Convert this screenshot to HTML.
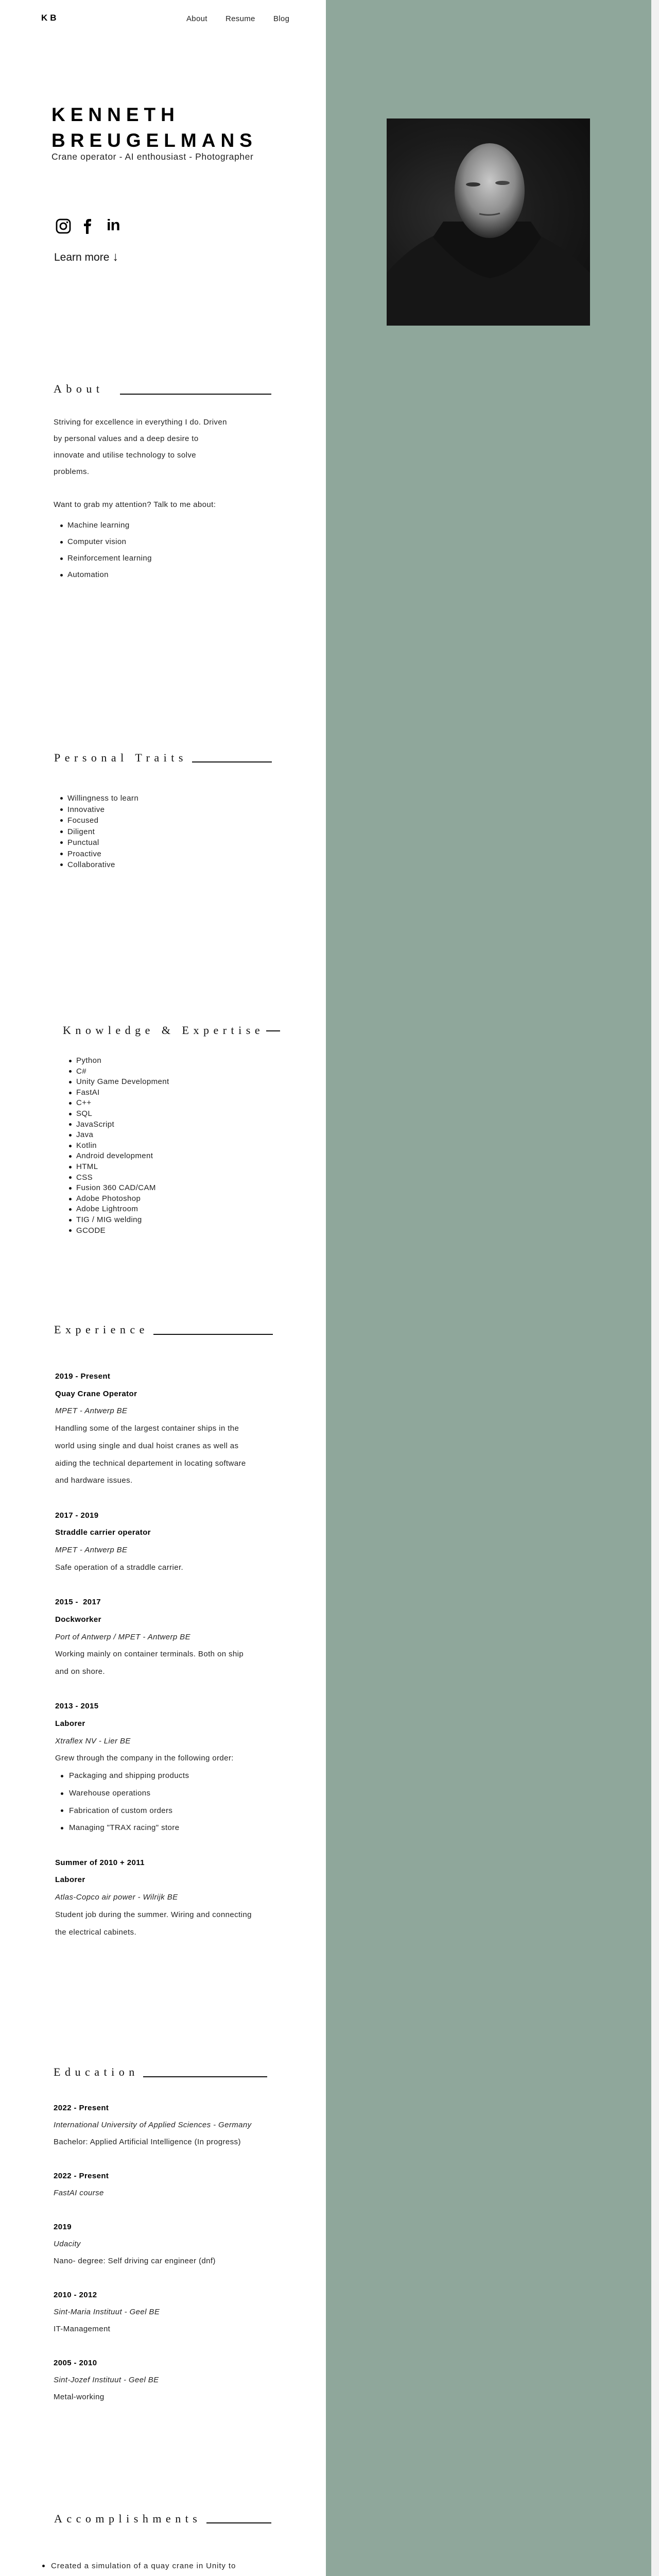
<!DOCTYPE html>
<html><head><meta charset="utf-8">
<style>
*{margin:0;padding:0;box-sizing:border-box}
html,body{width:1280px;height:5484px;background:#fff;overflow:hidden}
body{position:relative;font-family:"Liberation Sans",sans-serif;color:#111}
.a{position:absolute;white-space:nowrap}
#green{position:absolute;left:633px;top:0;width:632px;height:5341px;background:#8fa79b}
#scroll{position:absolute;left:1265px;top:0;width:15px;height:5484px;background:#f1f1f1}
#photo{position:absolute;left:751px;top:230px;width:395px;height:402px;overflow:hidden;
 background:radial-gradient(ellipse at 35% 45%,#2e2e2e 0%,#1b1b1b 45%,#0d0d0d 100%)}
.nav{font-size:15px;top:28px;color:#222;letter-spacing:.3px}
.h{font-family:"Liberation Serif",serif;font-size:22px;letter-spacing:8.5px;color:#111;line-height:30px}
.rule{position:absolute;height:1.5px;background:#111}
.p{font-size:15px;color:#222;letter-spacing:.4px}
ul{list-style:none}
li{position:relative}
li:before{content:"";position:absolute;width:5px;height:5px;border-radius:50%;background:#111}
.b{font-weight:bold;color:#000}
.i{font-style:italic}
</style></head><body>
<div id="green"></div>
<div id="scroll"></div>
<div id="photo">
 <svg width="395" height="402" viewBox="0 0 395 402">
  <defs>
   <radialGradient id="face" cx="50%" cy="40%" r="60%"><stop offset="0" stop-color="#c9c9c9"/><stop offset=".6" stop-color="#8a8a8a"/><stop offset="1" stop-color="#2a2a2a"/></radialGradient>
  </defs>
  <path d="M0 402 L0 300 Q60 230 140 210 L255 210 Q340 240 395 300 L395 402 Z" fill="#161616"/>
  <path d="M90 230 Q150 300 200 310 Q260 300 300 230 L280 200 L110 200 Z" fill="#111"/>
  <ellipse cx="200" cy="140" rx="68" ry="92" fill="url(#face)"/>
  <ellipse cx="168" cy="128" rx="14" ry="4" fill="#333"/>
  <ellipse cx="225" cy="125" rx="14" ry="4" fill="#444"/>
  <path d="M180 185 Q200 190 220 184" stroke="#444" stroke-width="3" fill="none"/>
 </svg>
</div>

<div class="a" style="left:80px;top:25px;font-size:17px;font-weight:bold;letter-spacing:5px;color:#000">KB</div>
<div class="a nav" style="left:362px">About</div>
<div class="a nav" style="left:438px">Resume</div>
<div class="a nav" style="left:531px">Blog</div>

<div class="a" style="left:100px;top:198px;font-size:37px;font-weight:bold;letter-spacing:10px;line-height:50px;color:#000">KENNETH<br>BREUGELMANS</div>
<div class="a" style="left:100px;top:294px;font-size:17.5px;letter-spacing:.6px;color:#222">Crane operator - AI enthousiast - Photographer</div>

<svg class="a" style="left:108px;top:424px" width="30" height="30" viewBox="0 0 30 30"><rect x="2" y="2" width="26" height="26" rx="7" fill="none" stroke="#000" stroke-width="2.8"/><circle cx="15" cy="15" r="6" fill="none" stroke="#000" stroke-width="2.8"/><circle cx="22.5" cy="7.5" r="1.7" fill="#000"/></svg>
<svg class="a" style="left:160px;top:424px" width="20" height="30" viewBox="0 0 20 30"><path d="M7 30 V15 H3 V10 H7 V7 Q7 1 13 1 H17 V6 H14 Q12 6 12 8 V10 H17 L16 15 H12 V30 Z" fill="#000"/></svg>
<div class="a" style="left:207px;top:419px;font-size:31px;font-weight:bold;color:#000;letter-spacing:-1px">in</div>

<div class="a" style="left:105px;top:485px;font-size:21px;color:#111">Learn more <span style="font-size:24px">↓</span></div>

<!-- About -->
<div class="a h" style="left:104px;top:740px">About</div>
<div class="rule" style="left:233px;top:764px;width:294px"></div>
<div class="a p" style="left:104px;top:804px;line-height:32px">Striving for excellence in everything I do. Driven<br>by personal values and a deep desire to<br>innovate and utilise technology to solve<br>problems.<br><br>Want to grab my attention? Talk to me about:</div>
<ul class="a p" style="left:131px;top:1004px;line-height:32px">
<li>Machine learning</li><li>Computer vision</li><li>Reinforcement learning</li><li>Automation</li></ul>

<!-- Traits -->
<div class="a h" style="left:105px;top:1456px">Personal Traits</div>
<div class="rule" style="left:373px;top:1478px;width:155px"></div>
<ul class="a p" style="left:131px;top:1539px;line-height:21.5px">
<li>Willingness to learn</li><li>Innovative</li><li>Focused</li><li>Diligent</li><li>Punctual</li><li>Proactive</li><li>Collaborative</li></ul>

<!-- Knowledge -->
<div class="a h" style="left:122px;top:1985px">Knowledge &amp; Expertise</div>
<div class="rule" style="left:517px;top:2000px;width:27px"></div>
<ul class="a p" style="left:148px;top:2049px;line-height:20.6px">
<li>Python</li><li>C#</li><li>Unity Game Development</li><li>FastAI</li><li>C++</li><li>SQL</li><li>JavaScript</li><li>Java</li><li>Kotlin</li><li>Android development</li><li>HTML</li><li>CSS</li><li>Fusion 360 CAD/CAM</li><li>Adobe Photoshop</li><li>Adobe Lightroom</li><li>TIG / MIG welding</li><li>GCODE</li></ul>

<!-- Experience -->
<div class="a h" style="left:105px;top:2566px">Experience</div>
<div class="rule" style="left:298px;top:2589px;width:232px"></div>
<div class="a p" style="left:107px;top:2655px;line-height:33.7px">
<span class="b">2019 - Present</span><br>
<span class="b">Quay Crane Operator</span><br>
<span class="i">MPET - Antwerp BE</span><br>
Handling some of the largest container ships in the<br>
world using single and dual hoist cranes as well as<br>
aiding the technical departement in locating software<br>
and hardware issues.<br><br>
<span class="b">2017 - 2019</span><br>
<span class="b">Straddle carrier operator</span><br>
<span class="i">MPET - Antwerp BE</span><br>
Safe operation of a straddle carrier.<br><br>
<span class="b">2015 -&nbsp; 2017</span><br>
<span class="b">Dockworker</span><br>
<span class="i">Port of Antwerp / MPET - Antwerp BE</span><br>
Working mainly on container terminals. Both on ship<br>
and on shore.<br><br>
<span class="b">2013 - 2015</span><br>
<span class="b">Laborer</span><br>
<span class="i">Xtraflex NV - Lier BE</span><br>
Grew through the company in the following order:<br>
<span style="display:inline-block;width:27px"></span>Packaging and shipping products<br>
<span style="display:inline-block;width:27px"></span>Warehouse operations<br>
<span style="display:inline-block;width:27px"></span>Fabrication of custom orders<br>
<span style="display:inline-block;width:27px"></span>Managing "TRAX racing" store<br><br>
<span class="b">Summer of 2010 + 2011</span><br>
<span class="b">Laborer</span><br>
<span class="i">Atlas-Copco air power - Wilrijk BE</span><br>
Student job during the summer. Wiring and connecting<br>
the electrical cabinets.
</div>
<div class="a" style="left:118px;top:3445px;width:5px;height:5px;border-radius:50%;background:#111"></div>
<div class="a" style="left:118px;top:3479px;width:5px;height:5px;border-radius:50%;background:#111"></div>
<div class="a" style="left:118px;top:3512px;width:5px;height:5px;border-radius:50%;background:#111"></div>
<div class="a" style="left:118px;top:3546px;width:5px;height:5px;border-radius:50%;background:#111"></div>

<!-- Education -->
<div class="a h" style="left:104px;top:4007px">Education</div>
<div class="rule" style="left:278px;top:4030px;width:241px"></div>
<div class="a p" style="left:104px;top:4075px;line-height:33px">
<span class="b">2022 - Present</span><br>
<span class="i">International University of Applied Sciences - Germany</span><br>
Bachelor: Applied Artificial Intelligence (In progress)<br><br>
<span class="b">2022 - Present</span><br>
<span class="i">FastAI course</span><br><br>
<span class="b">2019</span><br>
<span class="i">Udacity</span><br>
Nano- degree: Self driving car engineer (dnf)<br><br>
<span class="b">2010 - 2012</span><br>
<span class="i">Sint-Maria Instituut - Geel BE</span><br>
IT-Management<br><br>
<span class="b">2005 - 2010</span><br>
<span class="i">Sint-Jozef Instituut - Geel BE</span><br>
Metal-working
</div>

<!-- Accomplishments -->
<div class="a h" style="left:105px;top:4874px">Accomplishments</div>
<div class="rule" style="left:401px;top:4896px;width:126px"></div>
<div class="a p" style="left:99px;top:4964px;line-height:33px;letter-spacing:.9px">
Created a simulation of a quay crane in Unity to<br>
explore different automation innovations.<br>
Developed an Android GPS application aimed at<br>
motorcyclists accompanied by a route builder<br>
website. Improving on much of the shortcomings<br>
of traditional motorcycle GPS units.<br>
Built a custom CNC router. Everything was<br>
designed, build and setup by myself.
</div>
<div class="a" style="left:82px;top:4978px;width:5px;height:5px;border-radius:50%;background:#111"></div>
<div class="a" style="left:82px;top:5044px;width:5px;height:5px;border-radius:50%;background:#111"></div>
<div class="a" style="left:82px;top:5176px;width:5px;height:5px;border-radius:50%;background:#111"></div>

<div class="a" style="left:207px;top:5439px;font-family:'Liberation Serif',serif;font-size:15px;color:#555">© 2022 by Kenneth Breugelmans.</div>

<style>
ul li:before{left:-14px;top:calc(50% - 2.5px)}
</style>
</body></html>
